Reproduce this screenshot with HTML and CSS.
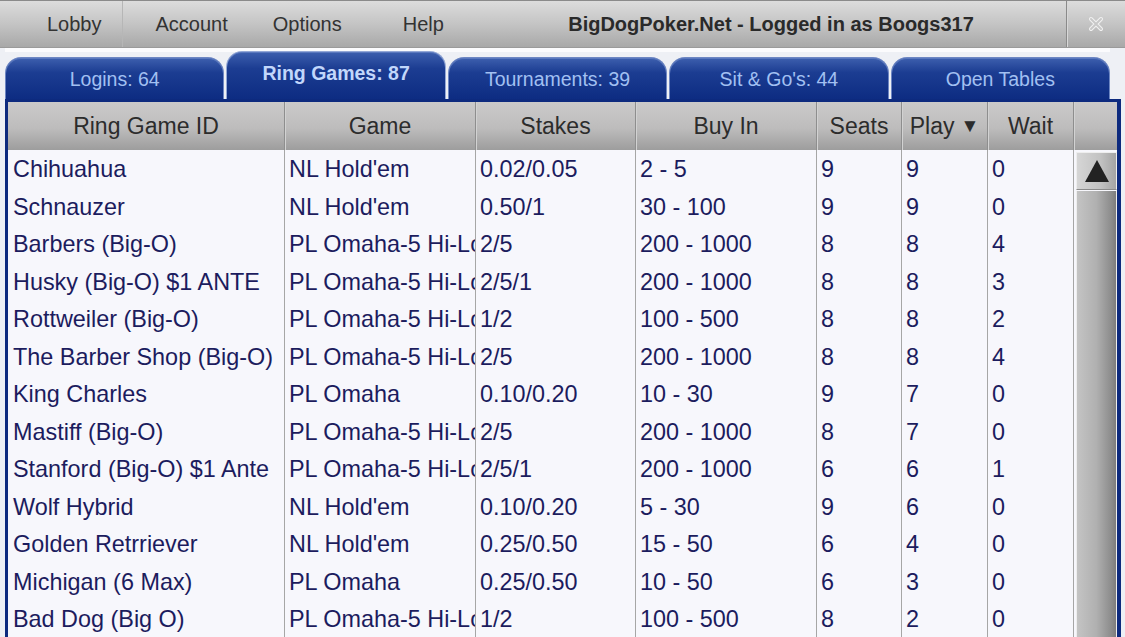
FILE: index.html
```html
<!DOCTYPE html>
<html lang="en">
<head>
  <meta charset="UTF-8" />
  <title>Lobby - BigDogPoker.Net</title>
  <link rel="stylesheet" href="styles.css">
</head>
<body>

  <div class="topbar">
    <div class="menu">
      <span class="menu-item lobby">Lobby</span>
      <span class="menu-item account">Account</span>
      <span class="menu-item options">Options</span>
      <span class="menu-item help">Help</span>
    </div>
    <div class="title">BigDogPoker.Net - Logged in as Boogs317</div>
    <div class="close">
      <svg width="16" height="16" viewBox="0 0 16 16">
        <path d="M3 3 L13 13 M13 3 L3 13" stroke="#f2f2f2" stroke-width="4" stroke-linecap="round"/>
        <path d="M3 3 L13 13 M13 3 L3 13" stroke="#c8c8c8" stroke-width="2" stroke-linecap="round"/>
      </svg>
    </div>
  </div>

  <div class="tabs">
    <div class="tab">Logins: 64</div>
    <div class="tab active">Ring Games: 87</div>
    <div class="tab">Tournaments: 39</div>
    <div class="tab">Sit &amp; Go's: 44</div>
    <div class="tab">Open Tables</div>
  </div>

  <div class="panel">
    <div class="head">
      <div class="hcell">Ring Game ID</div>
      <div class="hcell">Game</div>
      <div class="hcell">Stakes</div>
      <div class="hcell">Buy In</div>
      <div class="hcell">Seats</div>
      <div class="hcell">Play <span class="sort">&#9660;</span></div>
      <div class="hcell">Wait</div>
      <div class="hcell"></div>
    </div>

    <div class="body">
      <div class="rows" id="rows"></div>
      <div class="scrollbar">
        <div class="scroll-up"><span class="arrow"></span></div>
        <div class="scroll-track"></div>
      </div>
    </div>
  </div>

  <script>
    // id, game, stakes, buy in, seats, playing, waiting
    const games = [
      ["Chihuahua", "NL Hold'em", "0.02/0.05", "2 - 5", 9, 9, 0],
      ["Schnauzer", "NL Hold'em", "0.50/1", "30 - 100", 9, 9, 0],
      ["Barbers (Big-O)", "PL Omaha-5 Hi-Lo", "2/5", "200 - 1000", 8, 8, 4],
      ["Husky (Big-O) $1 ANTE", "PL Omaha-5 Hi-Lo", "2/5/1", "200 - 1000", 8, 8, 3],
      ["Rottweiler (Big-O)", "PL Omaha-5 Hi-Lo", "1/2", "100 - 500", 8, 8, 2],
      ["The Barber Shop (Big-O)", "PL Omaha-5 Hi-Lo", "2/5", "200 - 1000", 8, 8, 4],
      ["King Charles", "PL Omaha", "0.10/0.20", "10 - 30", 9, 7, 0],
      ["Mastiff (Big-O)", "PL Omaha-5 Hi-Lo", "2/5", "200 - 1000", 8, 7, 0],
      ["Stanford (Big-O) $1 Ante", "PL Omaha-5 Hi-Lo", "2/5/1", "200 - 1000", 6, 6, 1],
      ["Wolf Hybrid", "NL Hold'em", "0.10/0.20", "5 - 30", 9, 6, 0],
      ["Golden Retrriever", "NL Hold'em", "0.25/0.50", "15 - 50", 6, 4, 0],
      ["Michigan (6 Max)", "PL Omaha", "0.25/0.50", "10 - 50", 6, 3, 0],
      ["Bad Dog (Big O)", "PL Omaha-5 Hi-Lo", "1/2", "100 - 500", 8, 2, 0]
    ];

    const rows = document.getElementById("rows");
    games.forEach(g => {
      const row = document.createElement("div");
      row.className = "row";
      g.forEach(value => {
        const cell = document.createElement("div");
        cell.className = "cell";
        cell.textContent = value;
        row.appendChild(cell);
      });
      rows.appendChild(row);
    });
  </script>
</body>
</html>
```

FILE: styles.css
```css
* {
  box-sizing: border-box;
  margin: 0;
  padding: 0;
}
body {
  font-family: 'Liberation Sans', Arial, sans-serif;
  background: #eef0f5;
  height: 637px;
  overflow: hidden;
}

/* Top Bar */
.topbar {
  height: 48px;
  display: flex;
  align-items: center;
  background: linear-gradient(#dcdcdc, #c4c4c4 50%, #a8a8a8);
  border-top: 1px solid #8a8a8a;
  border-bottom: 1px solid #9a9a9a;
  color: #333;
}
.menu {
  display: flex;
  height: 100%;
  width: 476px;
}
.menu-item {
  display: flex;
  align-items: center;
  font-size: 20px;
  height: 100%;
}
.lobby {
  padding: 0 20px 0 47px;
  border-right: 1px solid #b6b6b6;
}
.account {
  padding-left: 33px;
}
.options {
  padding-left: 45px;
}
.help {
  padding-left: 61px;
}
.title {
  flex: 1;
  text-align: center;
  font-size: 20px;
  font-weight: bold;
  color: #2a2a2a;
}
.close {
  width: 59px;
  height: 100%;
  display: flex;
  align-items: center;
  justify-content: center;
  border-left: 1px solid #8a8a8a;
  box-shadow: inset 1px 0 0 #d8d8d8;
}

/* Tabs */
.tabs {
  display: flex;
  gap: 2px;
  align-items: flex-end;
  height: 51px;
  margin: 0 15px 0 5px;
  border-top: 4px solid #fbfbfd;
}
.tab {
  flex: 1;
  height: 42px;
  display: flex;
  align-items: center;
  justify-content: center;
  padding-top: 2px;
  font-size: 19.5px;
  color: #a2c0f2;
  background: linear-gradient(#3d5fae, #1c3d92 35%, #0d2c82);
  border: 1px solid #6d86c2;
  border-bottom: none;
  border-radius: 16px 16px 0 0;
  box-shadow: inset 0 1px 0 #5a78be;
}
.tab.active {
  height: 48px;
  padding-bottom: 6px;
  font-weight: bold;
  color: #c2d7fb;
  border-color: #94a8d6;
}

/* Panel */
.panel {
  margin: 0 4px 0 5px;
  padding: 3px 4px 0 3px;
  background: #0d2a7e;
  height: 538px;
}
.head {
  display: grid;
  grid-template-columns: 276px 191px 160px 181px 85px 86px 86px 44px;
  height: 48px;
  background: linear-gradient(#cbcaca, #bdbcbc 55%, #9d9d9d);
}
.hcell {
  display: flex;
  align-items: center;
  justify-content: center;
  font-size: 23px;
  color: #2c2c2c;
  border-left: 1px solid #8e8e8e;
  box-shadow: inset 1px 0 0 #d2d2d2;
  white-space: nowrap;
}
.hcell:first-child {
  border-left: none;
  box-shadow: none;
}
.sort {
  font-size: 19px;
  margin-left: 6px;
}

/* Rows */
.body {
  display: flex;
  background: #f7f7fc;
  height: 487px;
}
.rows {
  width: 1065px;
}
.row {
  display: grid;
  grid-template-columns: 276px 191px 160px 181px 85px 86px 86px;
  height: 37.5px;
}
.cell {
  display: flex;
  align-items: center;
  padding: 2px 0 0 4px;
  font-size: 23.4px;
  color: #1c1c5e;
  white-space: nowrap;
  overflow: hidden;
  border-left: 1px solid #a6a6a6;
}
.cell:first-child {
  border-left: none;
  padding-left: 5px;
}

/* Scrollbar */
.scrollbar {
  width: 44px;
  border-left: 1px solid #a6a6a6;
  padding: 2px 0 0 2px;
  display: flex;
  flex-direction: column;
}
.scroll-up {
  height: 38px;
  display: flex;
  align-items: center;
  justify-content: center;
  background: linear-gradient(90deg, #d6d6d6, #c2c2c2 60%, #a4a4a4);
  border: 1px solid #eeeeee;
  border-bottom: 1px solid #8a8a8a;
}
.arrow {
  width: 0;
  height: 0;
  border-left: 12px solid transparent;
  border-right: 12px solid transparent;
  border-bottom: 22px solid #222;
}
.scroll-track {
  flex: 1;
  margin-top: 1px;
  background: linear-gradient(90deg, #c4c4c4, #b0b0b0 50%, #8a8a8a 90%, #7c7c7c);
  border-left: 1px solid #eeeeee;
  border-right: 1px solid #eeeeee;
}
```
